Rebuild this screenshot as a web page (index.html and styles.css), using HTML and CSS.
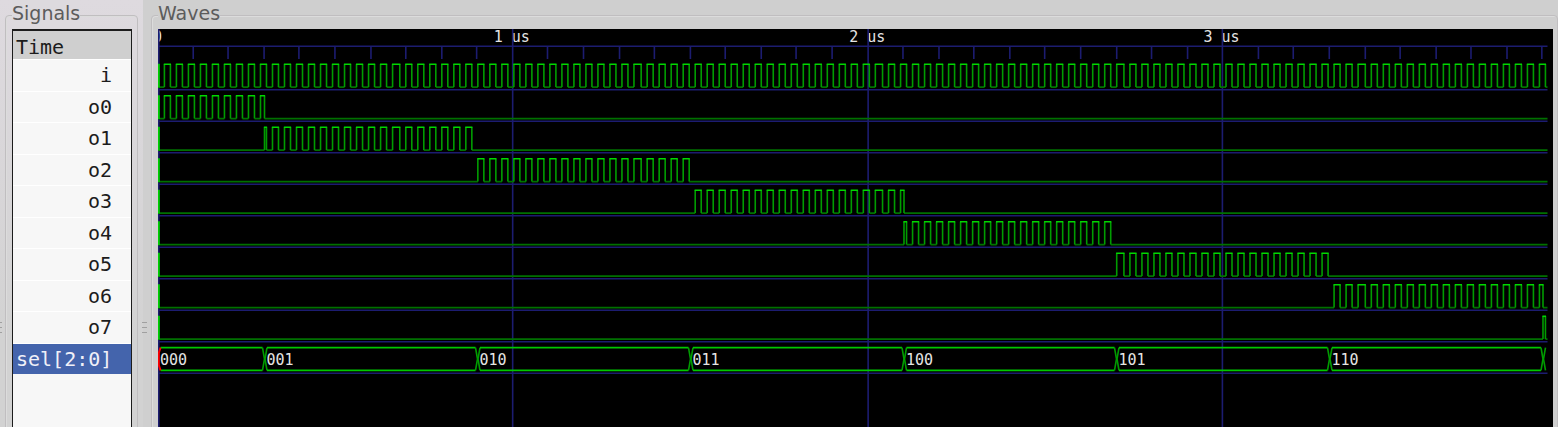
FILE: index.html
```html
<!DOCTYPE html>
<html lang="en">
<head>
<meta charset="utf-8">
<title>Waveform viewer</title>
<link rel="stylesheet" href="styles.css">
</head>
<body>
<main class="viewer">
  <div class="grip grip-edge"></div>
  <section class="frame signals" aria-labelledby="signals-title">
    <h2 class="frame-title" id="signals-title">Signals</h2>
    <div class="signal-box">
      <div class="time">Time</div>
      <ul class="signal-list">
        <li>i</li><li>o0</li><li>o1</li><li>o2</li><li>o3</li>
        <li>o4</li><li>o5</li><li>o6</li><li>o7</li>
        <li class="selected">sel[2:0]</li>
      </ul>
    </div>
  </section>
  <div class="grip grip-split"></div>
  <section class="frame waves" aria-labelledby="waves-title">
    <h2 class="frame-title" id="waves-title">Waves</h2>
    <div class="wave-box"><svg class="wave-canvas" id="canvas" role="img" aria-label="Signal waveforms"></svg></div>
  </section>
</main>
<script src="waves.js"></script>
</body>
</html>
```
FILE: styles.css
```css
* { box-sizing: border-box; }

body {
  margin: 0;
  background: #cfcfcf;
  font-family: "DejaVu Sans", sans-serif;
  color: #1c1c1c;
}

.viewer {
  display: flex;
  height: 100vh;
  overflow: hidden;
  background: linear-gradient(#dedadf, #d2d2d2 80%) 0 0 / 143px 100% no-repeat;
}

.frame {
  position: relative;
  display: flex;
  flex-direction: column;
}

.frame::before {
  content: "";
  position: absolute;
  inset: 15px 0 -10px;
  border: 1px solid #c0bec0;
  border-radius: 4px;
  box-shadow: inset 1px 1px #dcdcdc;
}

.frame-title {
  position: relative;
  align-self: flex-start;
  margin: 0;
  height: 29px;
  font-size: 19px;
  font-weight: 400;
  line-height: 26px;
  color: #5c5c5c;
}

.signals {
  flex: 0 0 133px;
  padding: 0 6px 0 7px;
}

.signals .frame-title { background: #dddade; }

.signal-box {
  position: relative;
  flex: 1;
  border: solid #1c1c1c;
  border-width: 2px 1px 0;
  background: #f7f7f7;
  font-family: "DejaVu Sans Mono", monospace;
  font-size: 20px;
}

.time {
  height: 28px;
  padding: 0 3px;
  background: #cfcfcf;
  line-height: 32px;
}

.signal-list {
  display: grid;
  grid-template-rows: repeat(10, 1fr);
  height: 315px;
  margin: 0;
  padding: 0;
  list-style: none;
  text-align: right;
}

.signal-list li {
  padding-right: 19px;
  border-top: 1px solid #fff;
  line-height: 30px;
}

.signal-list .selected {
  padding: 0 3px;
  background: #4464ac;
  background-clip: padding-box;
  color: #f0f0f8;
  text-align: left;
}

.grip {
  display: flex;
  align-items: center;
  justify-content: center;
}

.grip::before {
  content: "";
  width: 5px;
  height: 11px;
  margin-top: 227px;
  background: repeating-linear-gradient(#a0a0a0 0 1px, transparent 1px 5px);
}

.grip-edge { flex: 0 0 5px; }
.grip-edge::before { width: 2px; margin-right: 3px; }
.grip-split { flex: 0 0 13px; }

.waves {
  flex: 1;
  min-width: 0;
  padding: 0 5px 0 7px;
}

.waves .frame-title { background: #cfcfcf; }

.wave-box {
  position: relative;
  flex: 1;
  min-height: 0;
  background: #000;
  overflow: hidden;
}

.wave-canvas {
  display: block;
  width: 100%;
  height: 100%;
  fill: none;
  stroke-width: 1.6;
  font-family: "DejaVu Sans Mono", monospace;
}

.grid { stroke: #1c1c70; }
.high { stroke: #00d800; }
.low { stroke: #007000; }
.edge { stroke: #009c00; }
.start { stroke: #00d000; stroke-width: 2; }
.bus { stroke: #00c800; }
.unknown { stroke: #ff0000; stroke-width: 2; }
.label { fill: #e4e4e4; font-size: 15px; }
```
FILE: waves.js
```js
const PX = 1.2009;
const END = 1389.5;
const TOP = 35.3;
const PITCH = 31.5;
const SWING = 22.8;
const svg = document.getElementById("canvas");

function add(tag, attrs, text) {
  const el = document.createElementNS("http://www.w3.org/2000/svg", tag);
  for (const key in attrs) el.setAttribute(key, attrs[key]);
  if (text) el.textContent = text;
  svg.appendChild(el);
}
const path = (cls, d) => add("path", { class: cls, d });
const snap = (n) => Math.floor(n) * PX + 0.4;
const tick = (k) => snap(29.57 * k - 0.3);

// Time marks
add("text", { class: "label", x: -5, y: 13 }, "0");
for (let us = 1; us < 4; us++) {
  add("text", { class: "label", x: tick(us * 10) - 19, y: 13 }, `${us} us`);
}
for (let us = 0; us < 4; us++) path("grid", `M${us ? tick(us * 10) : .8} 0V2000`);

// Time ruler
let ruler = `M0 17.3H${END}`;
for (let k = 1; k < 40; k++) {
  if (k % 10) ruler += `M${tick(k)} 17v13`;
}
path("grid", ruler);
for (let row = 0; row < 10; row++) path("grid", `M0 ${60.8 + PITCH * row}H${END}`);

// Clock edges: odd entries rise, even entries fall
const clock = [];
for (let j = 1; j <= 230; j++) clock.push(snap(5.025 * j));

// Select values switch at these positions
const changes = [0, 106.5, 319.5, 532.5, 746, 958.5, 1171.5, 1385];
const windows = [[0, END], ...changes.map((x, i) => [x, changes[i + 1] || END])];

windows.forEach(([from, to], row) => {
  const high = TOP + PITCH * row;
  const low = high + SWING;
  let highs = "", lows = "", edges = "";
  let cursor = 0;
  for (let j = 0; j < clock.length; j += 2) {
    const rise = Math.max(clock[j], from);
    const fall = Math.min(clock[j + 1], to);
    if (fall <= rise) continue;
    lows += `M${cursor} ${low}H${rise}`;
    highs += `M${rise - .6} ${high}H${fall + .6}`;
    edges += `M${rise} ${high}V${low}M${fall} ${high}V${low}`;
    cursor = fall;
  }
  lows += `M${cursor} ${low}H${END}`;
  path("low", lows);
  path("edge", edges);
  path("high", highs);
  path("start", `M.8 ${high - .5}V${low + .5}`);
});

// Select bus
const busTop = 318.6, busBottom = 341.4, busMid = 330;
const values = ["000", "001", "010", "011", "100", "101", "110"];
values.forEach((value, i) => {
  const a = changes[i], b = changes[i + 1];
  path("bus", `M${a + 2.5} ${busTop}H${b - 2}M${a + 2.5} ${busBottom}H${b - 2}`);
  path("edge", `M${b - 2} ${busTop}L${b} ${busMid}L${b - 2} ${busBottom}`);
  path("edge", `M${b + 2.5} ${busTop}L${b + .5} ${busMid}L${b + 2.5} ${busBottom}`);
  add("text", { class: "label", x: a + 2, y: 336 }, value);
});
path("unknown", `M2.5 ${busTop}L.8 ${busMid - 6}v12L2.5 ${busBottom}`);
```
